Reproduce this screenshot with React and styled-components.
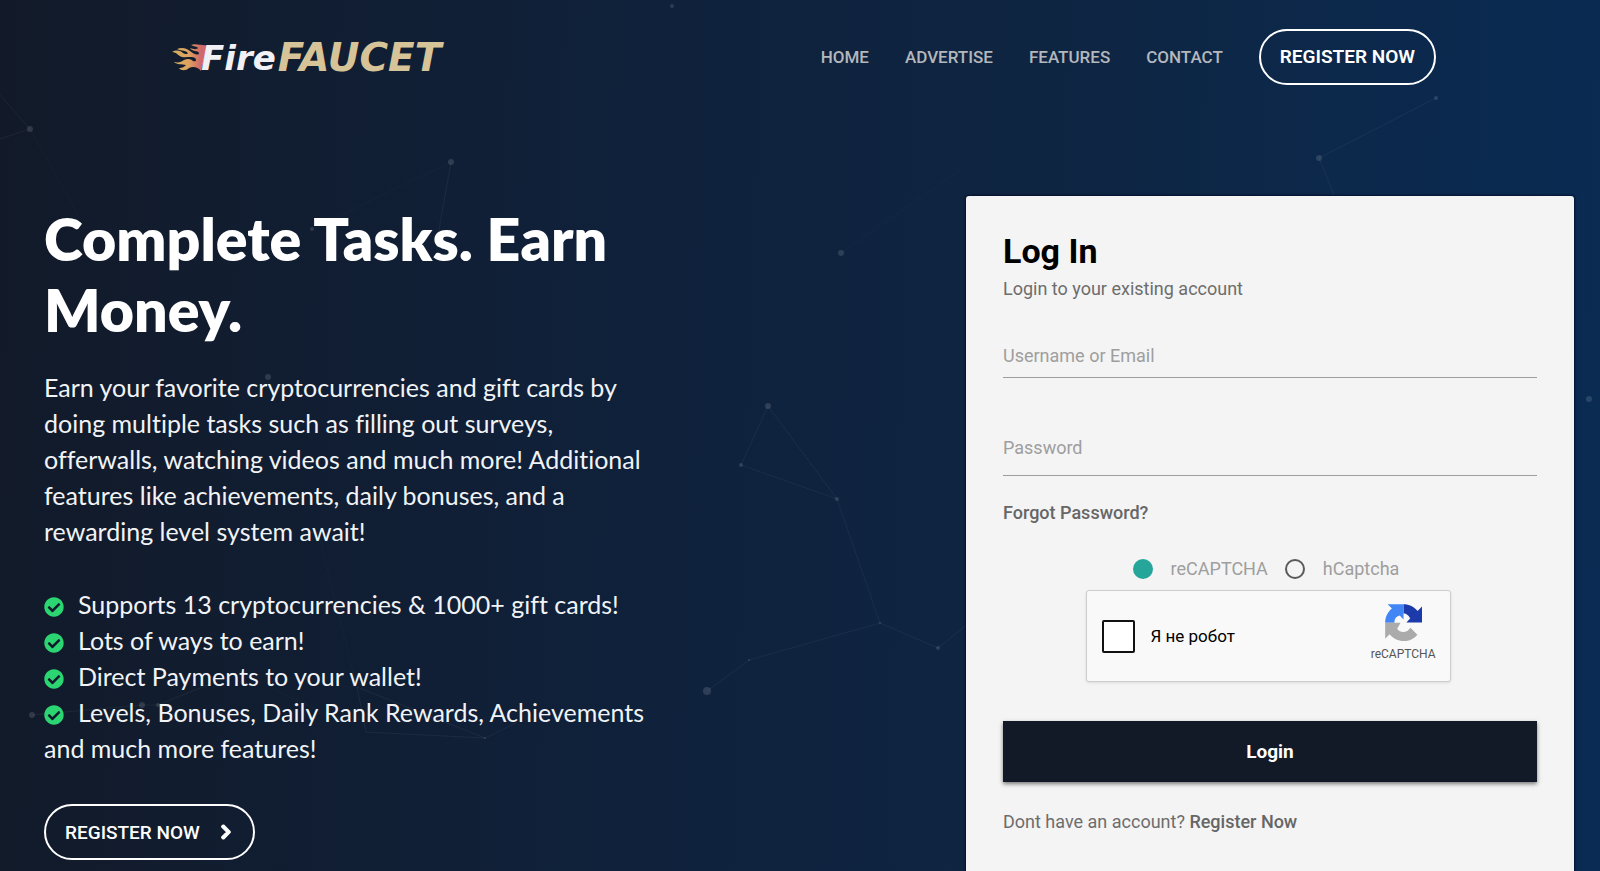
import React from "react";
import styled, { createGlobalStyle } from "styled-components";
import { FaCheckCircle, FaChevronRight } from "react-icons/fa";

const GlobalStyle = createGlobalStyle`
  * {
    box-sizing: border-box;
  }
  body {
    margin: 0;
    font-family: Roboto, "Liberation Sans", sans-serif;
  }
`;

const Page = styled.div`
  position: relative;
  display: flex;
  flex-direction: column;
  min-height: 100vh;
  overflow: hidden;
  background: linear-gradient(92deg, #121a29 0%, #0f223d 45%, #0e2542 65%, #0a2b53 100%);
`;

const Particles = styled.svg`
  position: absolute;
  top: 0;
  left: 0;
  width: 100%;
  height: 100%;
  pointer-events: none;
`;

const Header = styled.header`
  position: relative;
  display: flex;
  align-items: center;
  justify-content: space-between;
  height: 113px;
  padding: 0 164px 0 172px;
`;

const Logo = styled.a`
  display: flex;
  align-items: center;
  gap: 2px;
  padding-top: 2px;
  text-decoration: none;
  line-height: 40px;
  font-family: "DejaVu Sans", sans-serif;
  font-weight: bold;
  font-style: italic;
`;
const Flame = styled.svg`
  width: 36px;
  height: 28px;
  margin-right: -9px;
`;
const LogoFire = styled.span`
  font-size: 34px;
  color: #f1f1f5;
`;
const LogoFaucet = styled.span`
  font-size: 39px;
  color: #d6c397;
`;

const Nav = styled.nav`
  display: flex;
  align-items: center;
  gap: 36px;
`;
const NavLink = styled.a`
  font-size: 17px;
  font-weight: 500;
  color: #b4b7bc;
  text-decoration: none;
`;

const PillButton = styled.button`
  display: inline-flex;
  align-items: center;
  gap: 18px;
  height: 56px;
  padding: 0 19px;
  border: 2px solid #fff;
  border-radius: 28px;
  background: transparent;
  color: #fff;
  font-family: Roboto, "Liberation Sans", sans-serif;
  font-size: 19px;
  font-weight: ${(props) => (props.$strong ? 600 : 500)};
  svg {
    stroke: #fff;
    stroke-width: 50px;
  }
`;

const Main = styled.main`
  position: relative;
  flex: 1;
  display: flex;
  justify-content: space-between;
  padding: 83px 26px 0 44px;
`;

const Hero = styled.section`
  width: 40%;
  padding: 7px 0 10px;
  font-family: Lato, sans-serif;
  font-variant-ligatures: none;
  color: #f1f3f6;
`;
const HeroTitle = styled.h1`
  margin: 0 0 24px;
  font-size: 59px;
  line-height: 71px;
  font-weight: 800;
  color: #fff;
`;
const HeroText = styled.p`
  margin: 0 0 37px;
  font-size: 25px;
  line-height: 36px;
`;
const FeatureList = styled.ul`
  margin: 0 0 38px;
  padding: 0;
  list-style: none;
  font-size: 25px;
  line-height: 36px;
  svg {
    margin-right: 14px;
    width: 20px;
    height: 20px;
    vertical-align: -3px;
    color: #2bd571;
  }
`;

const Card = styled.form`
  display: flex;
  flex-direction: column;
  width: 38vw;
  padding: 35px 37px;
  border-radius: 3px 3px 0 0;
  background: #f4f4f4;
  color: #6d6d6d;
  font-size: 18px;
  line-height: 24px;
  box-shadow: 0 0 2px 1px rgba(0, 0, 30, 0.6);
`;
const CardTitle = styled.h2`
  margin: 0;
  font-size: 34px;
  line-height: 40px;
  font-weight: 700;
  color: #000;
`;
const CardSubtitle = styled.p`
  margin: 6px 0 0;
`;

const Field = styled.div`
  display: grid;
  height: 48px;
  margin-top: ${(props) => props.$gap}px;
  label,
  input {
    grid-area: 1 / 1;
  }
  label {
    padding-top: ${(props) => (props.$raised ? 8 : 14)}px;
    color: #9e9e9e;
    pointer-events: none;
  }
  input {
    width: 100%;
    padding: 0;
    border: 0;
    border-bottom: 1px solid #9e9e9e;
    border-radius: 0;
    outline: 0;
    background: transparent;
    font: inherit;
  }
`;

const TextLink = styled.a`
  align-self: flex-start;
  color: #666;
  font-weight: 500;
  text-decoration: none;
`;
const ForgotLink = styled(TextLink)`
  margin-top: 25px;
`;

const CaptchaChoice = styled.div`
  display: flex;
  justify-content: center;
  gap: 17px;
  margin: 32px 8px 0 0;
`;
const RadioLabel = styled.label`
  display: flex;
  align-items: center;
  gap: 18px;
  color: #9e9e9e;
`;
const Radio = styled.input`
  appearance: none;
  width: 20px;
  height: 20px;
  margin: 0;
  border: 2px solid #5a5a5a;
  border-radius: 50%;
  &:checked {
    border-color: #26a69a;
    background: #26a69a;
  }
`;

const CaptchaBox = styled.div`
  align-self: center;
  display: flex;
  align-items: center;
  justify-content: space-between;
  width: 365px;
  height: 92px;
  margin: 9px 4px 0 0;
  padding: 0 14px 0 15px;
  border: 1px solid #cdcdcd;
  border-radius: 3px;
  background: #f9f9f9;
  box-shadow: 0 1px 3px rgba(0, 0, 0, 0.1);
`;
const RobotLabel = styled.label`
  display: flex;
  align-items: center;
  gap: 16px;
  font-size: 17px;
  color: #000;
`;
const RobotCheck = styled.input`
  appearance: none;
  width: 33px;
  height: 33px;
  margin: 0;
  border: 2px solid #111;
  border-radius: 2px;
  background: #fff;
`;
const CaptchaBrand = styled.div`
  display: flex;
  flex-direction: column;
  align-items: center;
  padding-bottom: 2px;
  font-size: 12px;
  line-height: 26px;
  color: #555;
`;

const LoginButton = styled.button`
  height: 61px;
  margin-top: 39px;
  border: 0;
  background: #121a28;
  color: #fff;
  font-family: inherit;
  font-size: 19px;
  font-weight: 700;
  box-shadow: 0 2px 4px rgba(0, 0, 0, 0.5);
`;
const SignupText = styled.p`
  margin: 28px 0 0;
`;

const NAV_ITEMS = ["HOME", "ADVERTISE", "FEATURES", "CONTACT"];

const FEATURES = [
  "Supports 13 cryptocurrencies & 1000+ gift cards!",
  "Lots of ways to earn!",
  "Direct Payments to your wallet!",
  "Levels, Bonuses, Daily Rank Rewards, Achievements and much more features!",
];

// x, y, radius
const DOTS = [
  [672, 6, 2], [30, 129, 3], [451, 162, 3], [1319, 158, 3], [1436, 98, 2],
  [841, 253, 3], [1589, 399, 3], [768, 406, 3], [741, 465, 2], [837, 499, 2],
  [880, 623, 1], [938, 648, 2], [749, 660, 1], [707, 691, 4], [32, 715, 3],
  [142, 705, 3], [158, 705, 2], [268, 377, 3], [312, 229, 2], [485, 738, 1],
];

const LINES = [
  "M0 139L30 129L0 95",
  "M451 162L438 235",
  "M1436 98L1319 158L1334 195",
  "M768 406L741 465L837 499L768 406M837 499L880 623L938 648L968 624",
  "M707 691L749 660L880 623",
  "M32 715L142 705L158 705L210 684M357 687L485 738L366 732L357 687M485 738L516 723",
];
const FAINT_LINES = [
  "M30 129L78 215",
  "M451 162L312 229",
  "M841 253L960 170",
  "M271 688L340 720M332 685L357 687L320 540",
];

const FlameIcon = () => (
  <Flame viewBox="0 0 36 28" aria-hidden="true">
    <defs>
      <linearGradient id="flame" x1="0" x2="1">
        <stop offset="0" stopColor="#cfae62" />
        <stop offset="0.45" stopColor="#dfa45f" />
        <stop offset="0.8" stopColor="#d0686a" />
      </linearGradient>
    </defs>
    <path
      fill="url(#flame)"
      d="M36 1L29 27C26 23 21 22 17 24C14 27 9 27 7 24C11 24 12 23 14 21C10 20 5 21 2 18C7 19 9 18 12 16C16 14 19 15 21 17C24 18 25 16 23 14C20 12 14 14 10 13C6 12 5 8 0 8C5 5 9 7 11 9C14 11 17 10 15 8C12 6 8 7 5 5C10 3 14 4 18 7C21 10 27 12 27 9C26 6 20 8 18 4C21 5 25 6 26 4C25 2 22 3 19 1C24 -1 30 2 36 1Z"
    />
  </Flame>
);

const RecaptchaIcon = () => (
  <svg width="37" height="37" viewBox="0 0 64 64" aria-hidden="true">
    <path
      fill="#1c3aa9"
      d="M64 31.9V4.4L56.4 12C50.5 4.8 41.7 0.3 31.9 0.3L32 16.3C34 16 38 17 40 20C42 22 43 24 43.5 25L37 31.9H64Z"
    />
    <path
      fill="#4285f4"
      d="M31.9 0.3H4.4L12 7.9C4.8 13.8 0.3 22.6 0.3 32.4L16.3 32.3C16 27 18 23 22 21L25.5 20L32 27V0.3Z"
    />
    <path
      fill="#ababab"
      d="M0.3 32.4V59.9L7.9 52.3C13.8 59.5 22.6 64 32.4 64C42 64 50 60 56 53L44 41C41 45 38 48 33 48.5C28 49 24 47 21 43L27 32.4H0.3Z"
    />
  </svg>
);

const Background = () => (
  <Particles viewBox="0 0 1600 871" preserveAspectRatio="xMidYMid slice" aria-hidden="true">
    {LINES.map((d) => (
      <path key={d} d={d} fill="none" stroke="#fff" strokeOpacity="0.05" />
    ))}
    {FAINT_LINES.map((d) => (
      <path key={d} d={d} fill="none" stroke="#fff" strokeOpacity="0.02" />
    ))}
    {DOTS.map(([x, y, r]) => (
      <circle key={`${x}-${y}`} cx={x} cy={y} r={r} fill="#fff" fillOpacity="0.13" />
    ))}
  </Particles>
);

const LoginCard = () => (
  <Card onSubmit={(e) => e.preventDefault()}>
    <CardTitle>Log In</CardTitle>
    <CardSubtitle>Login to your existing account</CardSubtitle>
    <Field $gap={29}>
      <input id="username" type="text" />
      <label htmlFor="username">Username or Email</label>
    </Field>
    <Field $gap={50} $raised>
      <input id="password" type="password" />
      <label htmlFor="password">Password</label>
    </Field>
    <ForgotLink href="#forgot">Forgot Password?</ForgotLink>
    <CaptchaChoice>
      <RadioLabel>
        <Radio type="radio" name="captcha" defaultChecked />
        reCAPTCHA
      </RadioLabel>
      <RadioLabel>
        <Radio type="radio" name="captcha" />
        hCaptcha
      </RadioLabel>
    </CaptchaChoice>
    <CaptchaBox>
      <RobotLabel>
        <RobotCheck type="checkbox" />
        Я не робот
      </RobotLabel>
      <CaptchaBrand>
        <RecaptchaIcon />
        reCAPTCHA
      </CaptchaBrand>
    </CaptchaBox>
    <LoginButton type="submit">Login</LoginButton>
    <SignupText>
      Dont have an account? <TextLink href="#register">Register Now</TextLink>
    </SignupText>
  </Card>
);

const App = () => {
  return (
    <Page>
      <GlobalStyle />
      <Background />
      <Header>
        <Logo href="#home">
          <FlameIcon />
          <LogoFire>Fire</LogoFire>
          <LogoFaucet>FAUCET</LogoFaucet>
        </Logo>
        <Nav>
          {NAV_ITEMS.map((item) => (
            <NavLink key={item} href={`#${item.toLowerCase()}`}>
              {item}
            </NavLink>
          ))}
          <PillButton type="button" $strong>
            REGISTER NOW
          </PillButton>
        </Nav>
      </Header>
      <Main>
        <Hero>
          <HeroTitle>Complete Tasks. Earn Money.</HeroTitle>
          <HeroText>
            Earn your favorite cryptocurrencies and gift cards by doing multiple
            tasks such as filling out surveys, offerwalls, watching videos and
            much more! Additional features like achievements, daily bonuses, and
            a rewarding level system await!
          </HeroText>
          <FeatureList>
            {FEATURES.map((feature) => (
              <li key={feature}>
                <FaCheckCircle />
                {feature}
              </li>
            ))}
          </FeatureList>
          <PillButton type="button">
            REGISTER NOW <FaChevronRight size={16} />
          </PillButton>
        </Hero>
        <LoginCard />
      </Main>
    </Page>
  );
};

export default App;
